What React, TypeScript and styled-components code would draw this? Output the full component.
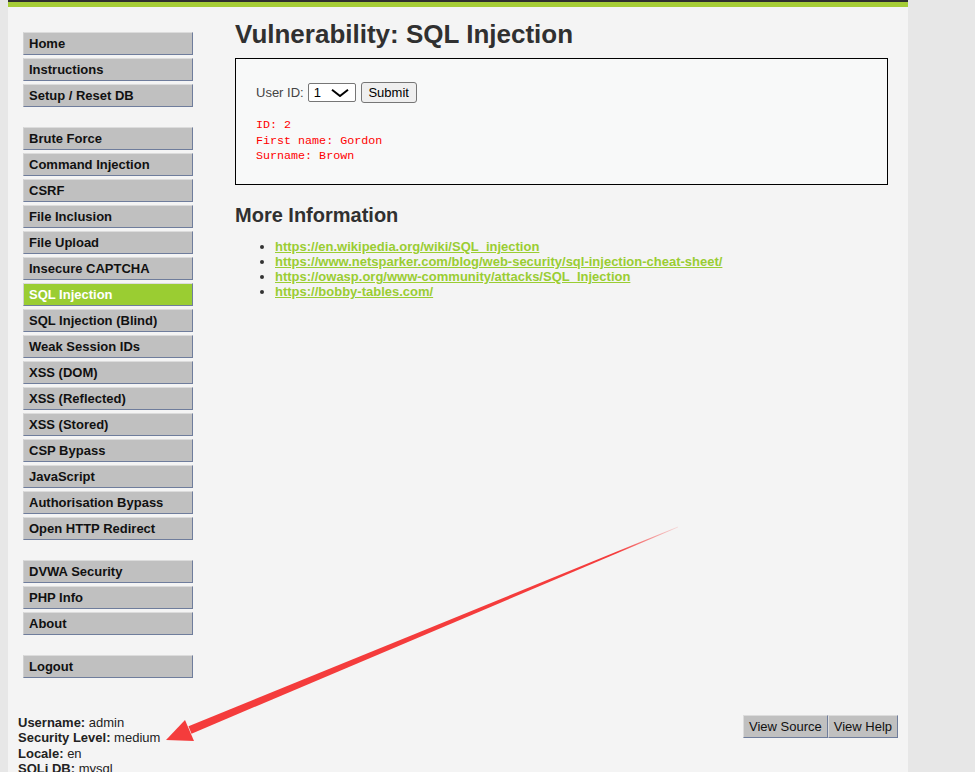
import React from "react";
import styled, { createGlobalStyle } from "styled-components";

const Global = createGlobalStyle`
  html, body { margin: 0; padding: 0; }
  body {
    background: #e7e7e7;
    font-family: "Liberation Sans", Arial, sans-serif;
    font-size: 13px;
    color: #222;
  }
`;

const Page = styled.div`
  position: relative;
  width: 975px;
  height: 772px;
  overflow: hidden;
`;

const Container = styled.div`
  margin-left: 8px;
  width: 900px;
  min-height: 772px;
  background: #f4f4f4;
  display: flex;
  flex-direction: column;
`;

const HeaderEdge = styled.div`
  height: 2px;
  background: #2f2f2f;
  border-bottom: 5px solid #a6cd36;
`;

const Body = styled.div`
  display: flex;
  padding: 25px 0 0 15px;
  gap: 42px;
`;

const Menu = styled.nav`
  width: 170px;
  display: flex;
  flex-direction: column;
  gap: 20px;
  flex-shrink: 0;
`;

const MenuGroup = styled.ul`
  list-style: none;
  margin: 0;
  padding: 0;
  display: flex;
  flex-direction: column;
  gap: 3px;
`;

const MenuItem = styled.li<{ $active?: boolean }>`
  box-sizing: border-box;
  height: 23px;
  display: flex;
  align-items: center;
  padding-left: 5px;
  background: ${(p) => (p.$active ? "#9acd32" : "#c0c0c0")};
  color: ${(p) => (p.$active ? "#ffffff" : "#111")};
  font-weight: bold;
  font-size: 13px;
  border-top: 1px solid #dcdcdc;
  border-left: 1px solid #d0d0d0;
  border-right: 1px solid #6f7d9c;
  border-bottom: 1px solid #6f7d9c;
`;

const Main = styled.main`
  width: 653px;
  display: flex;
  flex-direction: column;
`;

const Title = styled.h1`
  margin: -13px 0 0;
  font-size: 26px;
  line-height: 30px;
  font-weight: bold;
  color: #303030;
`;

const VulnBox = styled.div`
  margin-top: 9px;
  box-sizing: border-box;
  height: 127px;
  border: 1px solid #000;
  background: #f8f9f9;
  padding: 23px 20px 0;
`;

const FormRow = styled.form`
  display: flex;
  align-items: center;
  height: 21px;
  gap: 4px;
  color: #444;
  font-size: 13px;
`;

const SelectWrap = styled.div`
  position: relative;
  width: 48px;
  height: 19px;
`;

const Select = styled.select`
  appearance: none;
  box-sizing: border-box;
  width: 48px;
  height: 19px;
  border: 1px solid #767676;
  border-radius: 2px;
  background: #fff;
  font-family: "Liberation Sans", Arial, sans-serif;
  font-size: 13px;
  padding: 0 0 0 5px;
  color: #000;
`;

const Chevron = styled.svg`
  position: absolute;
  right: 7px;
  top: 6px;
  pointer-events: none;
`;

const SubmitButton = styled.button`
  margin-left: 1px;
  box-sizing: border-box;
  width: 56px;
  height: 21px;
  border: 1px solid #767676;
  border-radius: 3px;
  background: #efefef;
  font-family: "Liberation Sans", Arial, sans-serif;
  font-size: 13px;
  color: #000;
  padding: 0;
`;

const Result = styled.pre`
  margin: 15px 0 0;
  font-family: "Liberation Mono", "Courier New", monospace;
  font-size: 11.7px;
  line-height: 15.5px;
  color: #ff0000;
`;

const SubTitle = styled.h2`
  margin: 19px 0 0;
  font-size: 20px;
  line-height: 23px;
  font-weight: bold;
  color: #303030;
`;

const LinkList = styled.ul`
  margin: 12px 0 0;
  padding-left: 40px;
  font-size: 13px;
  line-height: 15px;
  color: #333;
`;

const Link = styled.a`
  color: #9acd32;
  font-weight: bold;
  text-decoration: underline;
`;

const Footer = styled.footer`
  margin-top: auto;
  display: flex;
  justify-content: space-between;
  align-items: flex-start;
  padding: 0 10px;
  height: 57px;
`;

const UserInfo = styled.div`
  margin-top: 0;
  font-size: 13px;
  line-height: 15.4px;
  color: #222;
`;

const Label = styled.b`
  font-weight: bold;
`;

const ButtonPair = styled.div`
  display: flex;
`;

const FooterButton = styled.button`
  box-sizing: border-box;
  height: 23px;
  padding: 0 5px;
  background: #c0c0c0;
  border-top: 1px solid #dcdcdc;
  border-left: 1px solid #dcdcdc;
  border-right: 1px solid #6f7d9c;
  border-bottom: 1px solid #6f7d9c;
  font-family: "Liberation Sans", Arial, sans-serif;
  font-size: 13px;
  color: #111;
`;

const ArrowLayer = styled.svg`
  position: absolute;
  left: 0;
  top: 0;
  pointer-events: none;
`;

const groups: string[][] = [
  ["Home", "Instructions", "Setup / Reset DB"],
  [
    "Brute Force",
    "Command Injection",
    "CSRF",
    "File Inclusion",
    "File Upload",
    "Insecure CAPTCHA",
    "SQL Injection",
    "SQL Injection (Blind)",
    "Weak Session IDs",
    "XSS (DOM)",
    "XSS (Reflected)",
    "XSS (Stored)",
    "CSP Bypass",
    "JavaScript",
    "Authorisation Bypass",
    "Open HTTP Redirect",
  ],
  ["DVWA Security", "PHP Info", "About"],
  ["Logout"],
];

const links = [
  "https://en.wikipedia.org/wiki/SQL_injection",
  "https://www.netsparker.com/blog/web-security/sql-injection-cheat-sheet/",
  "https://owasp.org/www-community/attacks/SQL_Injection",
  "https://bobby-tables.com/",
];

export default function App() {
  return (
    <Page>
      <Global />
      <Container>
        <HeaderEdge />
        <Body>
          <Menu>
            {groups.map((g, i) => (
              <MenuGroup key={i}>
                {g.map((item) => (
                  <MenuItem key={item} $active={item === "SQL Injection"}>
                    {item}
                  </MenuItem>
                ))}
              </MenuGroup>
            ))}
          </Menu>
          <Main>
            <Title>Vulnerability: SQL Injection</Title>
            <VulnBox>
              <FormRow onSubmit={(e) => e.preventDefault()}>
                User ID:
                <SelectWrap>
                  <Select defaultValue="1">
                    <option value="1">1</option>
                    <option value="2">2</option>
                  </Select>
                  <Chevron width="18" height="8" viewBox="0 0 18 8">
                    <polyline points="1,0.8 9,7 17,0.8" fill="none" stroke="#000" strokeWidth="2" />
                  </Chevron>
                </SelectWrap>
                <SubmitButton type="submit">Submit</SubmitButton>
              </FormRow>
              <Result>{"ID: 2\nFirst name: Gordon\nSurname: Brown"}</Result>
            </VulnBox>
            <SubTitle>More Information</SubTitle>
            <LinkList>
              {links.map((l) => (
                <li key={l}>
                  <Link href="#">{l}</Link>
                </li>
              ))}
            </LinkList>
          </Main>
        </Body>
        <Footer>
          <UserInfo>
            <div>
              <Label>Username:</Label> admin
            </div>
            <div>
              <Label>Security Level:</Label> medium
            </div>
            <div>
              <Label>Locale:</Label> en
            </div>
            <div>
              <Label>SQLi DB:</Label> mysql
            </div>
          </UserInfo>
          <ButtonPair>
            <FooterButton>View Source</FooterButton>
            <FooterButton>View Help</FooterButton>
          </ButtonPair>
        </Footer>
      </Container>
      <ArrowLayer width="975" height="772" viewBox="0 0 975 772">
        <defs>
          <linearGradient id="fade" x1="678" y1="527" x2="167" y2="740" gradientUnits="userSpaceOnUse">
            <stop offset="0" stopColor="#f43c3c" stopOpacity="0.15" />
            <stop offset="0.12" stopColor="#f43c3c" stopOpacity="1" />
            <stop offset="1" stopColor="#f43c3c" stopOpacity="1" />
          </linearGradient>
        </defs>
        <polygon
          points="678.2,526.5 677.8,527.5 191.5,733.7 188.5,726.3"
          fill="url(#fade)"
        />
        <polygon points="166,740 185,720 194,741" fill="#f43c3c" />
      </ArrowLayer>
    </Page>
  );
}
